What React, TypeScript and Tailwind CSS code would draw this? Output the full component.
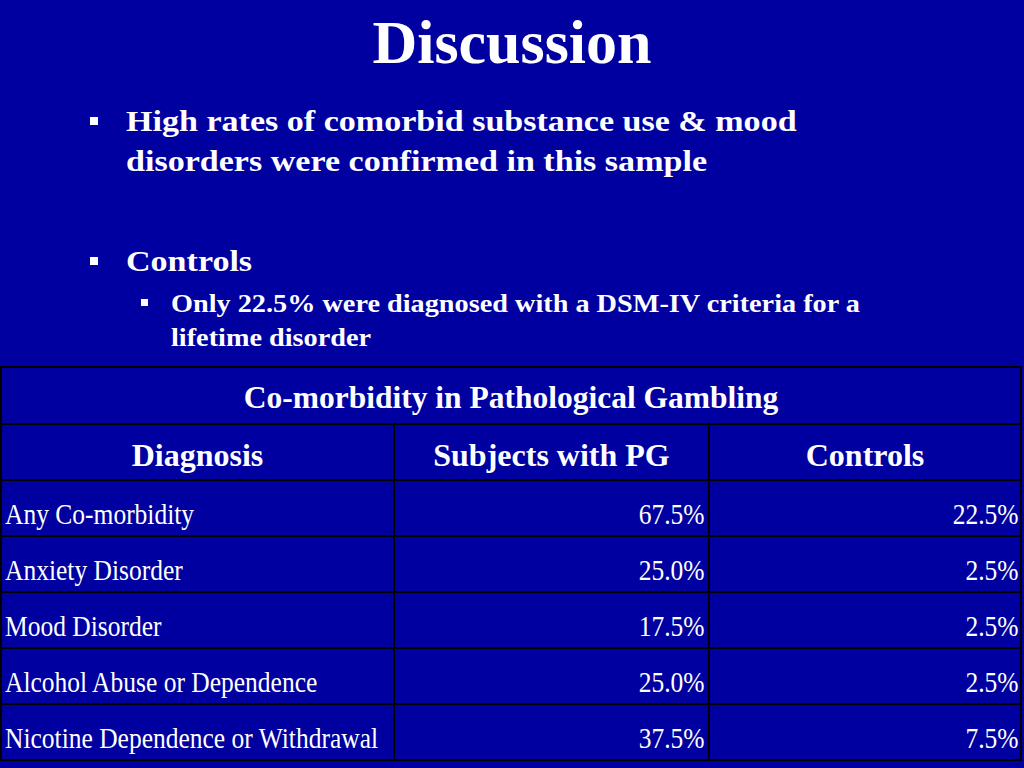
import React from "react";

const rows = [
  { label: "Any Co-morbidity", pg: "67.5%", ctrl: "22.5%" },
  { label: "Anxiety Disorder", pg: "25.0%", ctrl: "2.5%" },
  { label: "Mood Disorder", pg: "17.5%", ctrl: "2.5%" },
  { label: "Alcohol Abuse or Dependence", pg: "25.0%", ctrl: "2.5%" },
  { label: "Nicotine Dependence or Withdrawal", pg: "37.5%", ctrl: "7.5%" },
];

const serif = "font-['Liberation_Serif','Times_New_Roman',serif]";

function Square({ size }: { size: string }) {
  return <span className={`block bg-white ${size}`} />;
}

export default function App() {
  return (
    <div className={`relative w-full h-[768px] bg-[#0000a0] text-white overflow-hidden ${serif}`}>
      {/* Title */}
      <h1 className="pt-[11px] text-center text-[62px] font-bold leading-none">Discussion</h1>

      {/* Bullets */}
      <div className="pl-[90px] pt-[28px]">
        <div className="flex items-start">
          <div className="w-[36px] pt-[16px]">
            <Square size="w-[8px] h-[8px]" />
          </div>
          <p className="inline-block text-[30px] font-bold leading-[40px] whitespace-nowrap scale-x-[1.135] origin-left">
            High rates of comorbid substance use &amp; mood
            <br />
            disorders were confirmed in this sample
          </p>
        </div>

        <div className="flex items-start mt-[60px]">
          <div className="w-[36px] pt-[16px]">
            <Square size="w-[8px] h-[8px]" />
          </div>
          <p className="inline-block text-[30px] font-bold leading-[40px] whitespace-nowrap scale-x-[1.135] origin-left">
            Controls
          </p>
        </div>

        <div className="flex items-start pl-[51px] mt-[6px]">
          <div className="w-[30px] pt-[12px]">
            <Square size="w-[7px] h-[7px]" />
          </div>
          <p className="inline-block text-[25px] font-bold leading-[34px] whitespace-nowrap scale-x-[1.13] origin-left">
            Only 22.5% were diagnosed with a DSM-IV criteria for a
            <br />
            lifetime disorder
          </p>
        </div>
      </div>

      {/* Table */}
      <table className="absolute top-[366px] left-0 w-[1022px] table-fixed border-collapse border-2 border-black">
        <colgroup>
          <col className="w-[393px]" />
          <col className="w-[315px]" />
          <col />
        </colgroup>
        <tbody>
          <tr className="h-[57px]">
            <td colSpan={3} className="border-2 border-black text-center align-bottom pb-[10px] text-[31.5px] font-bold leading-none">
              Co-morbidity in Pathological Gambling
            </td>
          </tr>
          <tr className="h-[56px]">
            <td className="border-2 border-black text-center align-bottom pb-[8px] text-[32px] font-bold leading-none">
              Diagnosis
            </td>
            <td className="border-2 border-black text-center align-bottom pb-[8px] text-[32px] font-bold leading-none">
              Subjects with PG
            </td>
            <td className="border-2 border-black text-center align-bottom pb-[8px] text-[32px] font-bold leading-none">
              Controls
            </td>
          </tr>
          {rows.map((r) => (
            <tr key={r.label} className="h-[56px]">
              <td className="border-2 border-black align-bottom pl-[3px] pb-[6px] text-[30px] leading-none whitespace-nowrap">
                <span className="inline-block scale-x-[0.85] origin-left">{r.label}</span>
              </td>
              <td className="border-2 border-black align-bottom text-right pr-[4px] pb-[6px] text-[30px] leading-none">
                <span className="inline-block scale-x-[0.85] origin-right">{r.pg}</span>
              </td>
              <td className="border-2 border-black align-bottom text-right pr-[2px] pb-[6px] text-[30px] leading-none">
                <span className="inline-block scale-x-[0.85] origin-right">{r.ctrl}</span>
              </td>
            </tr>
          ))}
        </tbody>
      </table>
    </div>
  );
}
